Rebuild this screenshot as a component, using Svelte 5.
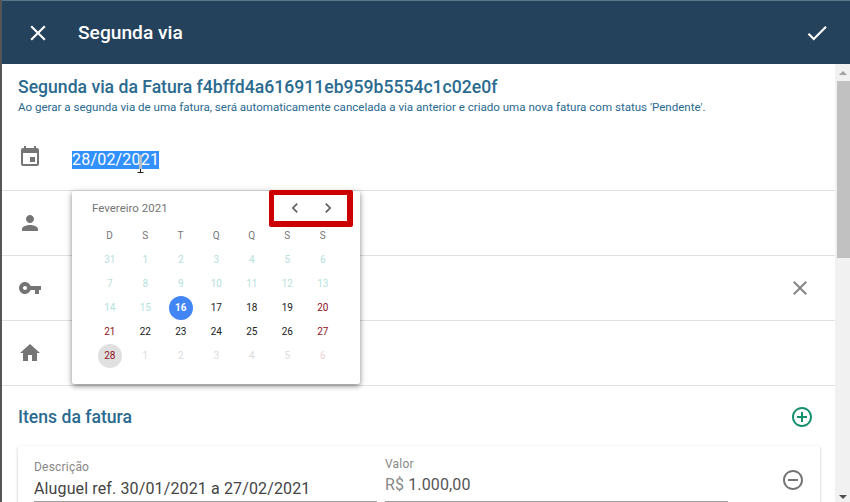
<script>
  const weekdays = ["D", "S", "T", "Q", "Q", "S", "S"];
  const days = [
    [31, "off"], [1, "off"], [2, "off"], [3, "off"], [4, "off"], [5, "off"], [6, "off"],
    [7, "off"], [8, "off"], [9, "off"], [10, "off"], [11, "off"], [12, "off"], [13, "off"],
    [14, "off"], [15, "off"], [16, "today"], [17, ""], [18, ""], [19, ""], [20, "hol"],
    [21, "hol"], [22, ""], [23, ""], [24, ""], [25, ""], [26, ""], [27, "hol"],
    [28, "sel"], [1, "next"], [2, "next"], [3, "next"], [4, "next"], [5, "next"], [6, "nexthol"]
  ];
</script>

<div class="dialog">
  <header class="toolbar">
    <svg class="close" viewBox="0 0 24 24"><path d="M19 6.41 17.59 5 12 10.59 6.41 5 5 6.41 10.59 12 5 17.59 6.41 19 12 13.41 17.59 19 19 17.59 13.41 12z" /></svg>
    <h1>Segunda via</h1>
    <svg class="check" viewBox="0 0 24 24"><path d="M9 16.17 4.83 12l-1.42 1.41L9 19 21 7l-1.41-1.41z" /></svg>
  </header>

  <div class="body">
    <main class="content">
      <section class="intro">
        <h2>Segunda via da Fatura f4bffd4a616911eb959b5554c1c02e0f</h2>
        <p>Ao gerar a segunda via de uma fatura, será automaticamente cancelada a via anterior e criado uma nova fatura com status 'Pendente'.</p>
      </section>

      <div class="row date">
        <svg class="cal" viewBox="0 0 24 24"><path d="M17 12h-5v5h5v-5zM16 1v2H8V1H6v2H5c-1.11 0-1.99.9-1.99 2L3 19c0 1.1.89 2 2 2h14c1.1 0 2-.9 2-2V5c0-1.1-.9-2-2-2h-1V1h-2zm3 18H5V8h14v11z" /></svg>
        <span class="selected">28/02/2021</span>
        <svg class="ibeam" viewBox="0 0 7 18">
          <path class="beam" d="M3.5 0v14" />
          <path class="caps" d="M3.5 14v3.5M.5 17.5h6" />
        </svg>
      </div>
      <div class="row">
        <svg viewBox="0 0 24 24"><path d="M12 12c2.21 0 4-1.79 4-4s-1.79-4-4-4-4 1.79-4 4 1.79 4 4 4zm0 2c-2.67 0-8 1.34-8 4v2h16v-2c0-2.66-5.33-4-8-4z" /></svg>
      </div>
      <div class="row">
        <svg viewBox="0 0 24 24"><path d="M12.65 10C11.83 7.67 9.61 6 7 6c-3.31 0-6 2.69-6 6s2.69 6 6 6c2.61 0 4.83-1.67 5.65-4H17v4h4v-4h2v-4H12.65zM7 14c-1.1 0-2-.9-2-2s.9-2 2-2 2 .9 2 2-.9 2-2 2z" /></svg>
        <svg class="clear" viewBox="0 0 24 24"><path d="M19 6.41 17.59 5 12 10.59 6.41 5 5 6.41 10.59 12 5 17.59 6.41 19 12 13.41 17.59 19 19 17.59 13.41 12z" /></svg>
      </div>
      <div class="row">
        <svg viewBox="0 0 24 24"><path d="M10 20v-6h4v6h5v-8h3L12 3 2 12h3v8z" /></svg>
      </div>

      <div class="items-head">
        <h3>Itens da fatura</h3>
        <svg class="add" viewBox="0 0 24 24"><path d="M13 7h-2v4H7v2h4v4h2v-4h4v-2h-4V7zm-1-5C6.48 2 2 6.48 2 12s4.48 10 10 10 10-4.48 10-10S17.52 2 12 2zm0 18c-4.41 0-8-3.59-8-8s3.59-8 8-8 8 3.59 8 8-3.59 8-8 8z" /></svg>
      </div>

      <div class="item">
        <div class="field desc">
          <label>Descrição</label>
          <span>Aluguel ref. 30/01/2021 a 27/02/2021</span>
        </div>
        <div class="field value">
          <label>Valor</label>
          <span><i>R$</i> 1.000,00</span>
        </div>
        <svg class="remove" viewBox="0 0 24 24"><path d="M7 11v2h10v-2H7zm5-9C6.48 2 2 6.48 2 12s4.48 10 10 10 10-4.48 10-10S17.52 2 12 2zm0 18c-4.41 0-8-3.59-8-8s3.59-8 8-8 8 3.59 8 8-3.59 8-8 8z" /></svg>
      </div>

      <div class="picker">
        <div class="picker-head">
          <span>Fevereiro 2021</span>
          <div class="nav">
            <svg viewBox="0 0 24 24"><path d="M15.41 7.41 14 6l-6 6 6 6 1.41-1.41L10.83 12z" /></svg>
            <svg viewBox="0 0 24 24"><path d="M8.59 16.59 10 18l6-6-6-6-1.41 1.41L13.17 12z" /></svg>
          </div>
        </div>
        <div class="grid">
          {#each weekdays as w}
            <span class="wd">{w}</span>
          {/each}
          {#each days as [n, kind]}
            <span class="day {kind}"><b>{n}</b></span>
          {/each}
        </div>
      </div>
    </main>

    <aside class="scrollbar">
      <span class="up"></span>
      <span class="thumb"></span>
      <span class="down"></span>
    </aside>
  </div>
</div>

<style>
  :global(body) {
    margin: 0;
    overflow: hidden;
    background: #fff;
  }

  .dialog {
    width: 850px;
    height: 502px;
    display: flex;
    flex-direction: column;
    overflow: hidden;
    box-sizing: border-box;
    border-left: 2px solid #555;
    font-family: Roboto, sans-serif;
  }

  .toolbar {
    height: 64px;
    flex: none;
    margin-left: -1px;
    box-sizing: border-box;
    border-top: 1px solid #5a7488;
    background: #25425c;
    display: flex;
    align-items: center;
    padding: 0 20px 0 24px;
    color: #fff;
  }

  .toolbar svg {
    width: 26px;
    height: 26px;
    fill: #fff;
    flex: none;
  }

  .toolbar h1 {
    margin: 0 0 0 27px;
    font-size: 19.2px;
    font-weight: 500;
    flex: 1;
  }

  .body {
    flex: 1;
    display: flex;
    min-height: 0;
  }

  .content {
    position: relative;
    width: 833px;
    flex: none;
  }

  .intro {
    box-sizing: border-box;
    padding: 13px 16px 0;
    height: 47px;
  }

  .intro h2 {
    margin: 0;
    font-size: 17.6px;
    line-height: 20px;
    font-weight: 500;
    color: #2a6a8f;
  }

  .intro p {
    margin: 2px 0 0;
    font-size: 11.57px;
    line-height: 16px;
    color: #2a6a8f;
    white-space: nowrap;
  }

  .row {
    height: 64px;
    border-bottom: 1px solid #e0e0e0;
    display: flex;
    align-items: center;
    padding-left: 16px;
  }

  .row svg {
    width: 24px;
    height: 24px;
    fill: #757575;
    flex: none;
  }

  .row .clear {
    margin-left: auto;
    margin-right: 23px;
    fill: #858585;
  }

  .row.date {
    height: 80px;
    padding-top: 19px;
    box-sizing: border-box;
    position: relative;
  }

  .row .cal {
    margin-top: -6px;
  }

  /* mouse cursor caught in the screenshot */
  .row .ibeam {
    position: absolute;
    left: 135px;
    top: 44px;
    width: 7px;
    height: 18px;
    fill: none;
  }

  .beam {
    stroke: #b9bec6;
    stroke-width: 3;
  }

  .caps {
    stroke: #222;
    stroke-width: 1;
  }

  .selected {
    margin-left: 30px;
    background: #3390ff;
    color: #fff;
    font-size: 16px;
    line-height: 18px;
    letter-spacing: 0.2px;
  }

  .items-head {
    height: 60px;
    box-sizing: border-box;
    padding: 1px 21px 0 16px;
    display: flex;
    align-items: center;
    justify-content: space-between;
  }

  .items-head h3 {
    margin: 0;
    font-size: 17.6px;
    font-weight: 500;
    color: #2a6a8f;
  }

  .add {
    width: 24px;
    height: 24px;
    fill: #14906f;
  }

  .item {
    margin: 0 15px 0 16px;
    height: 80px;
    border-radius: 2px;
    box-shadow: 0 1px 3px rgba(0, 0, 0, 0.25);
    display: flex;
    padding: 0 16px;
    position: relative;
  }

  .field {
    display: flex;
    flex-direction: column;
    border-bottom: 1px solid #9e9e9e;
    height: 56px;
    box-sizing: border-box;
  }

  .field.desc {
    width: 343px;
    padding-top: 13px;
  }

  .field.value {
    width: 343px;
    margin-left: 8px;
    padding-top: 10px;
  }

  .field label {
    font-size: 12px;
    line-height: 16px;
    color: #888;
    letter-spacing: 0.2px;
  }

  .field span {
    font-size: 16px;
    line-height: 22px;
    color: #444;
    letter-spacing: 0.13px;
  }

  .field.desc span {
    margin-top: 3px;
  }

  .field.value span {
    color: #555;
    margin-top: 2px;
  }

  .field i {
    font-style: normal;
    color: #888;
  }

  .remove {
    position: absolute;
    right: 15px;
    top: 22px;
    width: 24px;
    height: 24px;
    fill: #757575;
  }

  .picker {
    position: absolute;
    left: 70px;
    top: 127px;
    width: 288px;
    height: 193px;
    box-sizing: border-box;
    background: #fff;
    border-radius: 2px;
    box-shadow: 0 2px 5px rgba(0, 0, 0, 0.4), 0 1px 10px rgba(0, 0, 0, 0.12);
    padding: 0 0 0 20px;
  }

  .picker-head {
    height: 33px;
    display: flex;
    align-items: center;
    font-size: 11.5px;
    color: #757575;
  }

  .nav {
    position: absolute;
    left: 197px;
    top: -1px;
    width: 84px;
    height: 37px;
    box-sizing: border-box;
    border: solid #cc0000;
    border-width: 5px 6px 6px 5px;
    border-radius: 2px;
    display: flex;
    align-items: center;
    justify-content: space-between;
    padding: 0 9px 0 11px;
  }

  .nav svg {
    width: 20px;
    height: 20px;
    fill: #616161;
  }

  .grid {
    display: grid;
    grid-template-columns: repeat(7, 35.5px);
    grid-auto-rows: 24px;
    font-size: 10px;
    text-align: center;
  }

  .wd {
    color: #757575;
    font-size: 10px;
    line-height: 24px;
    letter-spacing: 0.3px;
  }

  .day {
    display: flex;
    align-items: center;
    justify-content: center;
    color: #212121;
  }

  .day b {
    width: 24px;
    height: 24px;
    line-height: 24px;
    border-radius: 50%;
    font-weight: 400;
  }

  .off { color: #b5e2dc; }
  .hol { color: #8e1020; }
  .next { color: #dcdcdc; }
  .nexthol { color: #efd5d8; }

  .today b {
    background: #4285f4;
    color: #fff;
    font-weight: 700;
  }

  .sel {
    color: #8e1020;
  }

  .sel b {
    background: #e0e0e0;
  }

  .scrollbar {
    flex: 1;
    background: #f1f1f1;
    display: flex;
    flex-direction: column;
    align-items: flex-end;
    position: relative;
  }

  .up {
    width: 0;
    height: 0;
    position: absolute;
    right: 3px;
    top: 7px;
    border: 4px solid transparent;
    border-top: 0;
    border-bottom: 4px solid #a3a3a3;
  }

  .thumb {
    margin-top: 17px;
    width: 13px;
    height: 177px;
    background: #c1c1c1;
  }

  .down {
    width: 0;
    height: 0;
    position: absolute;
    right: 3px;
    bottom: 3px;
    border: 4px solid transparent;
    border-bottom: 0;
    border-top: 4px solid #505050;
  }
</style>
